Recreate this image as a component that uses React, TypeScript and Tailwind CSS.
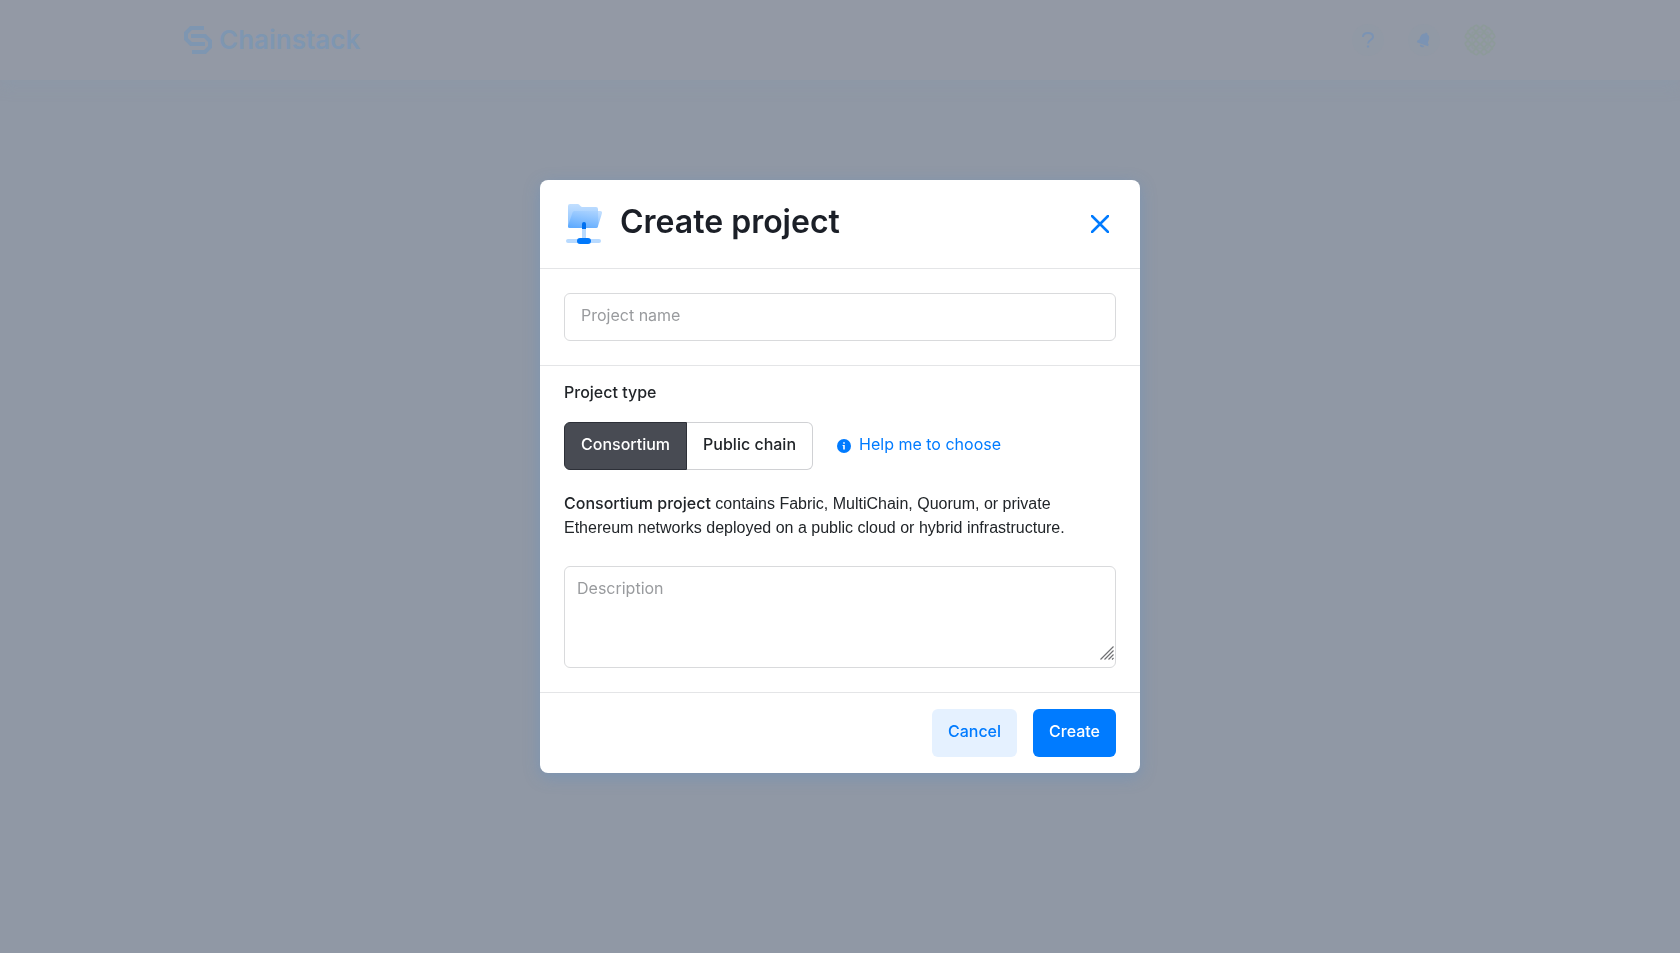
import React, { useState } from "react";

const options = ["Consortium", "Public chain"] as const;

function Logo() {
  return (
    <a href="#home" className="flex items-center gap-[7px] text-[#7e96b1]">
      <svg width="28" height="28" viewBox="0 0 28 28" fill="none" stroke="currentColor" strokeWidth="4">
        <path d="M20 2H7L2 7v6l5 5h14" />
        <path d="M7 10h14l5 5v6l-5 5H8" />
      </svg>
      <span className="text-[26px] leading-8 font-semibold">Chainstack</span>
    </a>
  );
}

function Avatar() {
  return (
    <svg width="32" height="32" viewBox="0 0 32 32" fill="none" stroke="#8d9a9a">
      <defs>
        <pattern id="diamonds" width="8" height="8" patternUnits="userSpaceOnUse">
          <path d="M4 .5L7.500 4L4 7.500L.5 4Z" strokeWidth="2" />
        </pattern>
        <clipPath id="round">
          <circle cx="16" cy="16" r="16" />
        </clipPath>
      </defs>
      <g clipPath="url(#round)">
        <rect width="32" height="32" fill="url(#diamonds)" stroke="none" />
        <path d="M8 8h16v16H8Z" />
      </g>
    </svg>
  );
}

function TopBar() {
  return (
    <header className="bg-[#9399a5] shadow-[0_4px_16px_rgba(130,155,178,0.25)]">
      <div className="mx-auto flex h-20 max-w-[1312px] items-center justify-between">
        <Logo />
        <div className="flex items-center gap-6">
          <button aria-label="Help" className="grid size-8 place-items-center rounded-full bg-[#9199a5] text-[#7b93b3]">
            <svg width="12" height="16" viewBox="0 0 12 16" fill="none" stroke="currentColor" strokeWidth="2">
              <path d="M1 5C1 2.400 3 1 6 1s5 1.500 5 4c0 3-5 3-5 6.500" />
              <path d="M6 13.500v2" strokeWidth="2.200" />
            </svg>
          </button>
          <button aria-label="Notifications" className="grid size-8 place-items-center rounded-full bg-[#9199a5] text-[#7b93b3]">
            <svg width="16" height="16" viewBox="0 0 16 16" fill="currentColor">
              <g transform="rotate(20 8 8)">
                <path d="M7 1.500V.5h2v1c2.200.5 3.500 2.200 3.500 4.500v3.200l1.500 1.600v1.700H2v-1.700l1.500-1.600V6c0-2.300 1.300-4 3.500-4.500Z" />
                <path d="M5.800 13.500h4.400c0 1.300-1 2-2.200 2s-2.200-.7-2.200-2Z" />
              </g>
            </svg>
          </button>
          <button aria-label="Account" className="rounded-full"><Avatar /></button>
        </div>
      </div>
    </header>
  );
}

function ProjectIcon() {
  return (
    <svg width="36" height="40" viewBox="0 0 36 40">
      <defs>
        <linearGradient id="back" x1="0" y1="0" x2="0" y2="1">
          <stop offset="0" stopColor="#c2dfff" />
          <stop offset="1" stopColor="#85bfff" />
        </linearGradient>
        <linearGradient id="front" x1="0.700" y1="0" x2="0.300" y2="1">
          <stop offset="0" stopColor="#a6d0ff" stopOpacity="0.700" />
          <stop offset="1" stopColor="#5fabff" />
        </linearGradient>
      </defs>
      <path d="M2 2a2 2 0 0 1 2-2h8c1.500 0 2.500 3 4 3h14a2 2 0 0 1 2 2v17a2 2 0 0 1-2 2H4a2 2 0 0 1-2-2Z" fill="url(#back)" />
      <path d="M6.500 8.500A2 2 0 0 1 8.300 7H34a2 2 0 0 1 1.900 2.500l-4 13A2 2 0 0 1 30 24H4a2 2 0 0 1-1.900-2.500Z" fill="url(#front)" />
      <path d="M16 24h4v11h-4Z" fill="#b8daff" />
      <path d="M16 25v-5a2 2 0 0 1 4 0v5Z" fill="#0070f0" />
      <rect y="35" width="35" height="4" rx="2" fill="#b8daff" />
      <rect x="11" y="34" width="14" height="6" rx="3" fill="#0078fb" />
    </svg>
  );
}

export default function App() {
  const [kind, setKind] = useState<string>("Consortium");
  return (
    <div className="min-h-screen bg-[#9098a5] font-['Inter',sans-serif] text-base text-[#212529]">
      <TopBar />
      <div className="fixed inset-0 flex items-center justify-center">
        <form
          role="dialog"
          aria-labelledby="title"
          onSubmit={(e) => e.preventDefault()}
          className="w-full max-w-[600px] rounded-lg bg-white shadow-[0_4px_16px_rgba(80,140,205,0.35)]"
        >
          <div className="flex h-[89px] items-center border-b border-[#e4e5e7] pr-6 pl-[26px]">
            <ProjectIcon />
            <h1 id="title" className="ml-[18px] pb-1 text-[32px] leading-10 font-semibold text-[#1b1f27]">Create project</h1>
            <button type="button" aria-label="Close" className="ml-auto grid size-8 place-items-center text-[#007bff]">
              <svg width="18" height="18" viewBox="0 0 18 18" fill="none" stroke="currentColor" strokeWidth="2.500" strokeLinecap="round">
                <path d="M1 1l16 16M17 1L1 17" />
              </svg>
            </button>
          </div>
          <div className="border-b border-[#e4e5e7] p-6">
            <input
              aria-label="Project name"
              placeholder="Project name"
              className="block h-12 w-full rounded-md border border-[#d9dadc] px-4 pb-1 placeholder:text-[#999b9e]"
            />
          </div>
          <div className="border-b border-[#e4e5e7] px-6 pt-[14px] pb-6">
            <h2 className="leading-6 font-medium">Project type</h2>
            <div className="mt-[18px] flex items-center">
              <div className="flex h-12" role="group" aria-label="Project type">
                {options.map((o) => (
                  <button
                    key={o}
                    type="button"
                    aria-pressed={kind === o}
                    onClick={() => setKind(o)}
                    className={
                      "border px-4 pb-1 font-medium first:rounded-l-md last:rounded-r-md " +
                      (kind === o ? "border-[#2d3038] bg-[#484b53] text-white" : "border-[#d0d1d4] bg-white first:border-r-0 last:border-l-0")
                    }
                  >
                    {o}
                  </button>
                ))}
              </div>
              <a href="#help" className="ml-6 flex items-center gap-2 pb-1 text-[#007bff]">
                <svg width="14" height="14" viewBox="1 1 14 14" className="mt-1">
                  <circle cx="8" cy="8" r="7" fill="#007bff" />
                  <path d="M7.200 4.200h1.600v1.600H7.200ZM6.600 7h2.200v4.500H7.200V8h-.6Z" fill="#fff" />
                </svg>
                Help me to choose
              </a>
            </div>
            <p className="mt-[22px] font-['Liberation_Sans',sans-serif] leading-6">
              <strong className="font-['Inter',sans-serif] leading-5 font-medium">Consortium project</strong> contains Fabric, MultiChain, Quorum, or private Ethereum networks deployed on a public cloud or hybrid infrastructure.
            </p>
            <div className="relative mt-[26px]">
              <textarea
                aria-label="Description"
                placeholder="Description"
                className="block h-[102px] w-full resize-none rounded-md border border-[#d9dadc] px-3 py-[9px] leading-6 placeholder:text-[#999b9e]"
              />
              <svg width="14" height="14" viewBox="0 0 14 14" className="pointer-events-none absolute right-0.5 bottom-2" stroke="#6f7073" strokeWidth="1.200">
                <path d="M.5 13.500l13-13M4.500 13.500l9-9M8.500 13.500l5-5M12 13.500l1.500-1.500" />
              </svg>
            </div>
          </div>
          <div className="flex justify-end gap-4 px-6 py-4 font-medium">
            <button type="button" className="h-12 rounded-md bg-[#e5f1ff] px-4 pb-1 text-[#007bff]">Cancel</button>
            <button type="submit" className="h-12 rounded-md bg-[#007bff] px-4 pb-1 text-white">Create</button>
          </div>
        </form>
      </div>
    </div>
  );
}
